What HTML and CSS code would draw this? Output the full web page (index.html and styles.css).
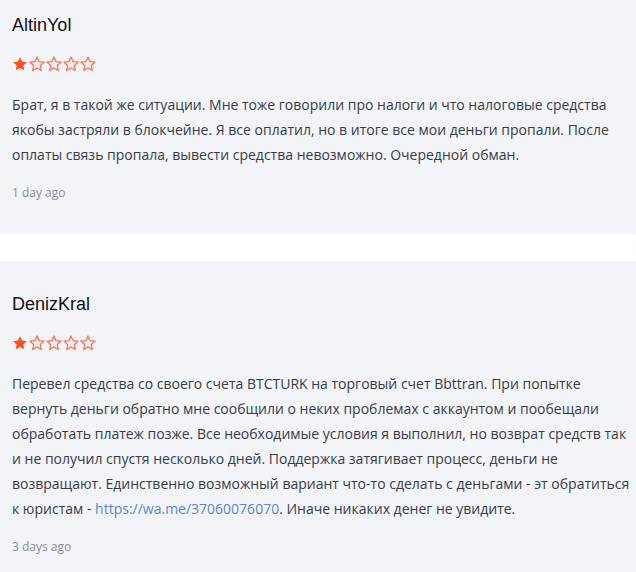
FILE: index.html
```html
<!DOCTYPE html>
<html lang="ru">
<head>
<meta charset="utf-8">
<link rel="stylesheet" href="styles.css">
</head>
<body>
<div class="review review--first">
  <div class="name">AltinYol</div>
  <div class="stars">
    <svg class="star" viewBox="0 0 24 24"><path class="full" d="M12 1.8l3.1 6.6 7.2.9-5.3 5 1.4 7.1L12 17.9l-6.4 3.5 1.4-7.1-5.3-5 7.2-.9z"/></svg>
    <svg class="star" viewBox="0 0 24 24"><path class="empty" d="M12 1.8l3.1 6.6 7.2.9-5.3 5 1.4 7.1L12 17.9l-6.4 3.5 1.4-7.1-5.3-5 7.2-.9z"/></svg>
    <svg class="star" viewBox="0 0 24 24"><path class="empty" d="M12 1.8l3.1 6.6 7.2.9-5.3 5 1.4 7.1L12 17.9l-6.4 3.5 1.4-7.1-5.3-5 7.2-.9z"/></svg>
    <svg class="star" viewBox="0 0 24 24"><path class="empty" d="M12 1.8l3.1 6.6 7.2.9-5.3 5 1.4 7.1L12 17.9l-6.4 3.5 1.4-7.1-5.3-5 7.2-.9z"/></svg>
    <svg class="star" viewBox="0 0 24 24"><path class="empty" d="M12 1.8l3.1 6.6 7.2.9-5.3 5 1.4 7.1L12 17.9l-6.4 3.5 1.4-7.1-5.3-5 7.2-.9z"/></svg>
  </div>
  <p class="text">Брат, я в такой же ситуации. Мне тоже говорили про налоги и что налоговые средства якобы застряли в блокчейне. Я все оплатил, но в итоге все мои деньги пропали. После оплаты связь пропала, вывести средства невозможно. Очередной обман.</p>
  <div class="time">1 day ago</div>
</div>
<div class="divider"></div>
<div class="review">
  <div class="name">DenizKral</div>
  <div class="stars">
    <svg class="star" viewBox="0 0 24 24"><path class="full" d="M12 1.8l3.1 6.6 7.2.9-5.3 5 1.4 7.1L12 17.9l-6.4 3.5 1.4-7.1-5.3-5 7.2-.9z"/></svg>
    <svg class="star" viewBox="0 0 24 24"><path class="empty" d="M12 1.8l3.1 6.6 7.2.9-5.3 5 1.4 7.1L12 17.9l-6.4 3.5 1.4-7.1-5.3-5 7.2-.9z"/></svg>
    <svg class="star" viewBox="0 0 24 24"><path class="empty" d="M12 1.8l3.1 6.6 7.2.9-5.3 5 1.4 7.1L12 17.9l-6.4 3.5 1.4-7.1-5.3-5 7.2-.9z"/></svg>
    <svg class="star" viewBox="0 0 24 24"><path class="empty" d="M12 1.8l3.1 6.6 7.2.9-5.3 5 1.4 7.1L12 17.9l-6.4 3.5 1.4-7.1-5.3-5 7.2-.9z"/></svg>
    <svg class="star" viewBox="0 0 24 24"><path class="empty" d="M12 1.8l3.1 6.6 7.2.9-5.3 5 1.4 7.1L12 17.9l-6.4 3.5 1.4-7.1-5.3-5 7.2-.9z"/></svg>
  </div>
  <p class="text">Перевел средства со своего счета BTCTURK на торговый счет Bbttran. При попытке вернуть деньги обратно мне сообщили о неких проблемах с аккаунтом и пообещали обработать платеж позже. Все необходимые условия я выполнил, но возврат средств так и не получил спустя несколько дней. Поддержка затягивает процесс, деньги не возвращают. Единственно возможный вариант что-то сделать с деньгами - эт обратиться к юристам - <a class="link" href="#">https://wa.me/37060076070</a>. Иначе никаких денег не увидите.</p>
  <div class="time">3 days ago</div>
</div>
</body>
</html>
```
FILE: styles.css
```css
html, body {
  margin: 0;
  padding: 0;
  background: #f3f4f8;
}
body {
  font-family: "Open Sans", "Liberation Sans", sans-serif;
  overflow: hidden;
}
.review {
  background: #f3f4f8;
  padding: 31px 2px 31px 12px;
}
.review--first {
  padding-top: 13px;
}
.name {
  font-family: "Liberation Sans", Arial, sans-serif;
  font-size: 18px;
  line-height: 24px;
  color: #111;
}
.stars {
  display: flex;
  gap: 1px;
  margin-top: 19px;
  height: 16px;
}
.star {
  width: 16px;
  height: 16px;
}
.full {
  fill: #ff4f1f;
}
.empty {
  fill: none;
  stroke: #ff6a4a;
  stroke-width: 1.8;
  stroke-linejoin: miter;
}
.text {
  margin: 20px 0 0 0;
  font-size: 14px;
  line-height: 25px;
  color: #363c48;
}
.link {
  color: #5a86d8;
  text-decoration: none;
}
.time {
  margin-top: 18px;
  font-size: 12px;
  line-height: 16px;
  color: #8a8f98;
}
.divider {
  height: 29px;
  background: #fff;
  box-shadow: inset 0 4px 4px -2px rgba(0, 0, 0, 0.04);
}
```
